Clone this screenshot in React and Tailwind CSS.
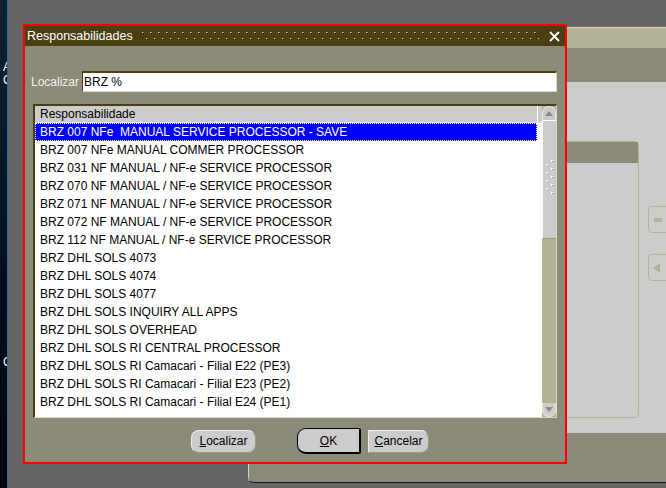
import React from "react";

const rows = [
  "BRZ 007 NFe  MANUAL SERVICE PROCESSOR - SAVE",
  "BRZ 007 NFe MANUAL COMMER PROCESSOR",
  "BRZ 031 NF MANUAL / NF-e SERVICE PROCESSOR",
  "BRZ 070 NF MANUAL / NF-e SERVICE PROCESSOR",
  "BRZ 071 NF MANUAL / NF-e SERVICE PROCESSOR",
  "BRZ 072 NF MANUAL / NF-e SERVICE PROCESSOR",
  "BRZ 112 NF MANUAL / NF-e SERVICE PROCESSOR",
  "BRZ DHL SOLS 4073",
  "BRZ DHL SOLS 4074",
  "BRZ DHL SOLS 4077",
  "BRZ DHL SOLS INQUIRY ALL APPS",
  "BRZ DHL SOLS OVERHEAD",
  "BRZ DHL SOLS RI CENTRAL PROCESSOR",
  "BRZ DHL SOLS RI Camacari - Filial E22 (PE3)",
  "BRZ DHL SOLS RI Camacari - Filial E23 (PE2)",
  "BRZ DHL SOLS RI Camacari - Filial E24 (PE1)",
];

function BgWindow() {
  return (
    <div className="absolute left-[248px] top-[27px] w-[430px] h-[456px] flex flex-col rounded-bl-[6px] border-l border-t border-b border-l-[#d6d4c2] border-t-[#d6d4c2] border-b-[#1a1a1a] overflow-hidden">
      <div className="h-[20px] bg-[#b3b196]" />
      <div className="h-[34px] bg-[#8c8a78]" />
      <div className="h-[351px] bg-[#cccccc] pt-[59px] flex items-start">
        <div className="ml-[148px] w-[251px] h-[277px] rounded-tr-[5px] rounded-br-[5px] border border-[#b3b196] flex flex-col">
          <div className="h-[21px] bg-[#8c8a78]" />
        </div>
        <div className="ml-[9px] mt-[65px] flex flex-col gap-[21px]">
          <div className="w-[30px] h-[27px] rounded-[4px] border border-[#b3b196] flex items-center pl-[5px]">
            <div className="w-[8px] h-[4px] bg-[#b3b196]" />
          </div>
          <div className="w-[30px] h-[27px] rounded-[4px] border border-[#b3b196] flex items-center pl-[4px]">
            <svg width="7" height="10" viewBox="0 0 7 10">
              <path d="M7 0 L0 5 L7 10 Z" fill="#b3b196" />
            </svg>
          </div>
        </div>
      </div>
      <div className="flex-1 bg-[#8c8a78]" />
    </div>
  );
}

function Scrollbar() {
  return (
    <div className="w-[14px] h-full bg-[#b3b196] flex flex-col">
      <div className="h-[14px] bg-[#cccccc] rounded-t-[7px] border-t border-l border-r border-[#e8e8e0] flex items-center justify-center">
        <svg width="8" height="5" viewBox="0 0 8 5">
          <path d="M0 5 L4 0 L8 5 Z" fill="#8c8a78" />
        </svg>
      </div>
      <div className="h-[119px] bg-[#cccccc] border-l border-t border-white border-b border-b-[#9a9886] flex items-start justify-center pt-[39px]">
        <svg width="8" height="34" viewBox="0 0 8 34">
          {[0, 1, 2, 3, 4].map((i) => (
            <g key={i}>
              <rect x="5" y={i * 8} width="2" height="2" fill="#ffffff" />
              <rect x="6" y={i * 8 + 1} width="1" height="1" fill="#9a9886" />
              <rect x="0" y={i * 8 + 4} width="2" height="2" fill="#ffffff" />
              <rect x="1" y={i * 8 + 5} width="1" height="1" fill="#9a9886" />
            </g>
          ))}
        </svg>
      </div>
      <div className="flex-1" />
      <div className="h-[14px] bg-[#cccccc] rounded-b-[7px] border-b border-l border-r border-[#e8e8e0] flex items-center justify-center">
        <svg width="8" height="5" viewBox="0 0 8 5">
          <path d="M0 0 L4 5 L8 0 Z" fill="#8c8a78" />
        </svg>
      </div>
    </div>
  );
}

function Dialog() {
  return (
    <div className="absolute left-[23px] top-[24px] w-[544px] h-[440px] border-2 border-[#ff0000] bg-[#8c8a78] flex flex-col">
      {/* title bar */}
      <div className="h-[20px] bg-[#4b3f12] flex items-center pl-[2px] pr-[5px] text-white shrink-0">
        <span className="leading-none whitespace-nowrap text-[12.5px]">Responsabilidades</span>
        <svg className="flex-1 h-[12px] ml-[9px] mr-[10px]">
          <defs>
            <pattern id="tdots" x="0" y="0" width="8" height="12" patternUnits="userSpaceOnUse">
              <rect x="0" y="2" width="1" height="1" fill="#e4e0c4" />
              <rect x="1" y="2" width="1" height="1" fill="#8a8060" />
              <rect x="1" y="3" width="1" height="1" fill="#100c04" />
              <rect x="4" y="8" width="1" height="1" fill="#e4e0c4" />
              <rect x="5" y="8" width="1" height="1" fill="#8a8060" />
              <rect x="5" y="9" width="1" height="1" fill="#100c04" />
            </pattern>
          </defs>
          <rect width="100%" height="100%" fill="url(#tdots)" />
        </svg>
        <svg width="11" height="11" viewBox="0 0 11 11">
          <path d="M1 1 L10 10 M10 1 L1 10" stroke="#ffffff" strokeWidth="1.8" />
        </svg>
      </div>

      {/* Localizar row */}
      <div className="flex items-center mt-[25px] pl-[6px] pr-[8px] shrink-0">
        <span className="w-[51px] text-[#f2f2f2] whitespace-nowrap">Localizar</span>
        <div className="flex-1 h-[21px] bg-white border-t-2 border-l border-[#4b3f12] border-b border-r border-b-[#d8d6c4] border-r-[#d8d6c4] flex items-center pl-[1px] text-black">
          BRZ %
        </div>
      </div>

      {/* list */}
      <div className="mt-[12px] mx-[8px] h-[314px] shrink-0 border-t-2 border-l-2 border-[#4b3f12] border-b border-r border-b-[#d8d6c4] border-r-[#d8d6c4] flex bg-white">
        <div className="flex-1 flex flex-col">
          <div className="h-[17px] bg-[#cccccc] flex items-center pl-[5px] text-black border-b border-[#e6e6e6] relative">
            Responsabilidade
            <div className="absolute right-[4px] top-0 h-full w-px bg-white" />
          </div>
          {rows.map((r, i) => (
            <div
              key={i}
              className={
                i === 0
                  ? "h-[18px] mr-[5px] bg-[#0000ff] text-white flex items-center pl-[5px] whitespace-pre outline-1 outline-dotted outline-white -outline-offset-1"
                  : "h-[18px] mr-[5px] text-black flex items-center pl-[5px] whitespace-pre"
              }
            >
              {r}
            </div>
          ))}
        </div>
        <Scrollbar />
      </div>

      {/* buttons */}
      <div className="flex items-center mt-[10px] pl-[166px] shrink-0">
        <div className="w-[65px] h-[23px] rounded-[8px] bg-[#cccccc] border-t border-l border-[#eeeeee] border-b border-r border-b-[#9a9886] border-r-[#9a9886] flex items-center justify-center text-black">
          <span><span className="underline">L</span>ocalizar</span>
        </div>
        <div className="ml-[41px] w-[64px] h-[26px] rounded-l-[9px] rounded-r-[2px] bg-[#cccccc] border border-black border-r-2 border-b-2 flex items-center justify-center text-black">
          <span><span className="underline">O</span>K</span>
        </div>
        <div className="ml-[7px] w-[61px] h-[23px] rounded-r-[8px] rounded-l-[1px] bg-[#cccccc] border-t border-l border-[#eeeeee] border-b border-r border-b-[#9a9886] border-r-[#9a9886] flex items-center justify-center text-black">
          <span><span className="underline">C</span>ancelar</span>
        </div>
      </div>
    </div>
  );
}

export default function App() {
  return (
    <div className="relative w-[666px] h-[488px] overflow-hidden bg-[#666666] font-['Liberation_Sans',Arial,sans-serif] text-[12px] leading-none">
      <div className="absolute left-0 top-0 h-full w-[8px] bg-linear-to-b from-[#0c2232] to-[#00040a] border-r border-[#2a6aa0] overflow-hidden text-white">
        <div className="absolute left-[3px] top-[61px]">A</div>
        <div className="absolute left-[3px] top-[74px]">C</div>
        <div className="absolute left-[3px] top-[356px]">C</div>
      </div>
      <BgWindow />
      <Dialog />
    </div>
  );
}
